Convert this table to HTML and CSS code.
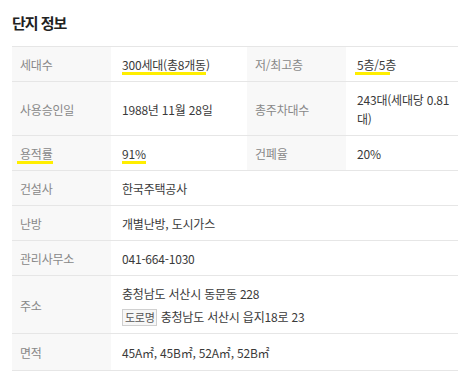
FILE: index.html
```html
<!DOCTYPE html>
<html lang="ko">
<head>
<meta charset="utf-8">
<link rel="stylesheet" href="styles.css">
</head>
<body>
<section class="panel">
  <h2 class="title">단지 정보</h2>
  <table class="info">
    <colgroup>
      <col class="c-label"><col class="c-value"><col class="c-label2"><col class="c-value2">
    </colgroup>
    <tr>
      <th>세대수</th>
      <td><span class="hl">300세대(총8개동</span>)</td>
      <th>저/최고층</th>
      <td><span class="hl hl-short">5층/5층</span></td>
    </tr>
    <tr class="tall">
      <th>사용승인일</th>
      <td>1988년 11월 28일</td>
      <th>총주차대수</th>
      <td>243대(세대당 0.81 대)</td>
    </tr>
    <tr>
      <th><span class="hl hl-lead">용적률</span></th>
      <td><span class="hl">91%</span></td>
      <th>건폐율</th>
      <td>20%</td>
    </tr>
    <tr>
      <th>건설사</th>
      <td colspan="3">한국주택공사</td>
    </tr>
    <tr>
      <th>난방</th>
      <td colspan="3">개별난방, 도시가스</td>
    </tr>
    <tr>
      <th>관리사무소</th>
      <td colspan="3">041-664-1030</td>
    </tr>
    <tr class="addr">
      <th>주소</th>
      <td colspan="3">
        <div>충청남도 서산시 동문동 228</div>
        <div class="road"><span class="badge">도로명</span> 충청남도 서산시 읍지18로 23</div>
      </td>
    </tr>
    <tr class="last">
      <th>면적</th>
      <td colspan="3">45A㎡, 45B㎡, 52A㎡, 52B㎡</td>
    </tr>
  </table>
</section>
</body>
</html>
```
FILE: styles.css
```css
* { box-sizing: border-box; }
html, body { margin: 0; padding: 0; background: #fff; }
body {
  font-family: "Noto Sans CJK KR", "Noto Sans", sans-serif;
  color: #333;
  width: 470px;
  height: 375px;
  overflow: hidden;
}
.panel { padding: 13px 12px 0 12px; }
.title {
  margin: 0 0 13px 0;
  font-size: 15px;
  line-height: 20px;
  font-weight: 700;
  color: #222;
  letter-spacing: -1px;
}
.info {
  width: 446px;
  table-layout: fixed;
  border-collapse: collapse;
  border-top: 1px solid #e6e6e6;
  font-size: 12px;
  line-height: 19px;
  letter-spacing: -0.2px;
}
.c-label { width: 99px; }
.c-value { width: 136px; }
.c-label2 { width: 99px; }
.c-value2 { width: 112px; }
.info tr { border-bottom: 1px solid #e6e6e6; }
.info th {
  background: #f8f8f8;
  color: #888;
  font-weight: 400;
  text-align: left;
  padding: 8px 8px 7px 8px;
  height: 35px;
  vertical-align: middle;
}
.info td {
  color: #3a3a3a;
  padding: 8px 8px 7px 11px;
  height: 35px;
  vertical-align: middle;
}
.info tr.tall td, .info tr.tall th { height: 53px; }
.info tr.addr td, .info tr.addr th { height: 58px; }
.info tr.last td, .info tr.last th { height: 37px; }
.hl { position: relative; display: inline-block; }
.hl::after {
  content: "";
  position: absolute;
  left: 0;
  right: 0;
  bottom: -1px;
  height: 3px;
  background: #ffee00;
}
.hl-short::after { left: -2px; right: 6px; }
.hl-lead::after { left: -3px; }
.road { margin-top: 4px; }
.badge {
  display: inline-block;
  font-size: 11px;
  line-height: 13px;
  padding: 1px 2px;
  border: 1px solid #d0d0d0;
  background: #f7f7f7;
  color: #555;
  letter-spacing: -0.3px;
}
```
